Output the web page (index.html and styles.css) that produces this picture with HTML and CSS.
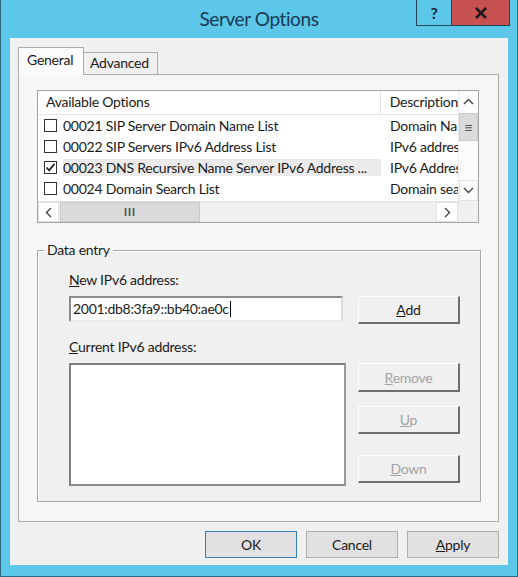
FILE: index.html
```html
<!DOCTYPE html>
<html lang="en">
<head>
  <meta charset="UTF-8" />
  <title>Server Options</title>
  <link rel="stylesheet" href="styles.css">
</head>
<body>
  <div class="window">
    <div class="titlebar">
      <span></span>
      <h1 class="title">Server Options</h1>
      <div class="caption-btns">
        <button class="cap-btn help">?</button>
        <button class="cap-btn close">
          <svg width="14" height="12" viewBox="0 0 14 12"><path d="M2 1 L12 11 M12 1 L2 11" stroke="#1b1b1b" stroke-width="2.6"/></svg>
        </button>
      </div>
    </div>

    <div class="client">
      <div class="tabs">
        <div class="tab active">General</div>
        <div class="tab">Advanced</div>
      </div>

      <div class="tab-page">
        <!-- option list -->
        <div class="listview">
          <div class="lv-body">
            <div class="lv-header">
              <div class="col-name">Available Options</div>
              <div class="col-desc">Description</div>
            </div>
            <div class="lv-row">
              <span class="check"></span>
              <div class="col-name">00021 SIP Server Domain Name List</div>
              <div class="col-desc">Domain Name List</div>
            </div>
            <div class="lv-row">
              <span class="check"></span>
              <div class="col-name">00022 SIP Servers IPv6 Address List</div>
              <div class="col-desc">IPv6 address list</div>
            </div>
            <div class="lv-row selected">
              <span class="check">
                <svg width="11" height="11" viewBox="0 0 11 11"><path d="M1.5 5.5 L4.2 8.3 L9.5 1.8" fill="none" stroke="#222" stroke-width="1.8"/></svg>
              </span>
              <div class="col-name">00023 DNS Recursive Name Server IPv6 Address ...</div>
              <div class="col-desc">IPv6 Address List</div>
            </div>
            <div class="lv-row">
              <span class="check"></span>
              <div class="col-name">00024 Domain Search List</div>
              <div class="col-desc">Domain search list</div>
            </div>
          </div>

          <div class="vscroll">
            <div class="sb-btn up">
              <svg width="11" height="7" viewBox="0 0 11 7"><path d="M1 6 L5.5 1.5 L10 6" fill="none" stroke="#444" stroke-width="1.4"/></svg>
            </div>
            <div class="sb-thumb v">≡</div>
            <div class="sb-track"></div>
            <div class="sb-btn down">
              <svg width="11" height="7" viewBox="0 0 11 7"><path d="M1 1 L5.5 5.5 L10 1" fill="none" stroke="#444" stroke-width="1.4"/></svg>
            </div>
          </div>

          <div class="hscroll">
            <div class="sb-btn left">
              <svg width="7" height="11" viewBox="0 0 7 11"><path d="M6 1 L1.5 5.5 L6 10" fill="none" stroke="#444" stroke-width="1.4"/></svg>
            </div>
            <div class="sb-thumb h">III</div>
            <div class="sb-track"></div>
            <div class="sb-btn right">
              <svg width="7" height="11" viewBox="0 0 7 11"><path d="M1 1 L5.5 5.5 L1 10" fill="none" stroke="#444" stroke-width="1.4"/></svg>
            </div>
          </div>
          <div class="sb-corner"></div>
        </div>

        <fieldset class="groupbox">
          <legend>Data entry</legend>
          <div class="entry-grid">
            <label class="field-label"><u>N</u>ew IPv6 address:</label>
            <div class="textbox">2001:db8:3fa9::bb40:ae0c<span class="caret"></span></div>
            <button class="btn add"><u>A</u>dd</button>

            <label class="field-label second"><u>C</u>urrent IPv6 address:</label>
            <div class="listbox"></div>
            <div class="side-btns">
              <button class="btn disabled remove"><u>R</u>emove</button>
              <button class="btn disabled up"><u>U</u>p</button>
              <button class="btn disabled down"><u>D</u>own</button>
            </div>
          </div>
        </fieldset>
      </div>

      <div class="dialog-btns">
        <button class="dlg-btn default">OK</button>
        <button class="dlg-btn">Cancel</button>
        <button class="dlg-btn"><u>A</u>pply</button>
      </div>
    </div>
  </div>
</body>
</html>
```

FILE: styles.css
```css
:root {
  --frame: #5cc7e9;
  --frame-edge: #2f6a84;
  --face: #f0f0f0;
  --line: #adadad;
  --text: #1a1a1a;
}

* { box-sizing: border-box; }

body {
  margin: 0;
  font-family: Lato, 'Noto Sans', sans-serif;
  font-size: 14px;
  letter-spacing: -0.25px;
  color: var(--text);
}

button { font: inherit; color: inherit; letter-spacing: inherit; }

.window {
  width: 518px;
  height: 577px;
  background: var(--frame);
  border: 1px solid var(--frame-edge);
  border-top: none;
  padding: 0 9px 11px;
  display: flex;
  flex-direction: column;
}

/* Title bar */
.titlebar {
  height: 38px;
  display: grid;
  grid-template-columns: 1fr auto 1fr;
  align-items: start;
}

.title {
  margin: 0;
  font-weight: normal;
  font-size: 19px;
  letter-spacing: -0.4px;
  line-height: 38px;
  color: #1a3a55;
}

.caption-btns {
  justify-self: end;
  display: flex;
  margin-right: -2px;
  border: 1px solid #23465a;
  border-top: none;
}

.cap-btn {
  height: 25px;
  border: none;
  padding: 0;
  display: flex;
  align-items: center;
  justify-content: center;
}

.cap-btn.help {
  width: 35px;
  background: var(--frame);
  border-right: 1px solid #23465a;
  font-weight: bold;
  font-size: 16px;
  color: #14283a;
}

.cap-btn.close {
  width: 57px;
  background: #c75050;
}

/* Client area */
.client {
  flex: 1;
  background: var(--face);
  padding: 9px 9px 0 8px;
  display: flex;
  flex-direction: column;
}

.tabs {
  display: flex;
  align-items: flex-end;
  height: 27px;
  position: relative;
  z-index: 1;
}

.tab {
  border: 1px solid var(--line);
  border-bottom: none;
  background: var(--face);
  height: 22px;
  width: 75px;
  margin-left: -1px;
  padding-left: 6px;
  line-height: 20px;
}

.tab.active {
  background: #fbfbfb;
  width: 66px;
  margin-left: 0;
  padding-left: 8px;
  line-height: 23px;
  margin-bottom: -1px;
  height: 28px;
}

.tab-page {
  height: 448px;
  border: 1px solid var(--line);
  background: #f6f6f6;
  padding: 15px 19px 0 18px;
}

/* List view */
.listview {
  height: 133px;
  border: 1px solid #a3a3a3;
  background: #fff;
  display: grid;
  grid-template-columns: 1fr 20px;
  grid-template-rows: 1fr 21px;
}

.lv-body {
  overflow: hidden;
  white-space: nowrap;
}

.lv-header {
  display: flex;
  height: 24px;
  border-bottom: 1px solid #e5e5e5;
  line-height: 21px;
}

.lv-header .col-name {
  width: 343px;
  padding-left: 8px;
  border-right: 1px solid #e5e5e5;
}

.lv-header .col-desc { padding-left: 9px; }

.lv-row {
  display: flex;
  align-items: center;
  height: 21px;
}

.check {
  width: 13px;
  height: 13px;
  margin: 0 6px;
  border: 1px solid #333;
  background: #fff;
  display: flex;
  align-items: center;
  justify-content: center;
  flex: none;
}

.lv-row .col-name {
  width: 318px;
  flex: none;
  overflow: hidden;
}

.lv-row.selected .col-name { background: #ebebeb; }

.lv-row .col-desc {
  padding-left: 9px;
  flex: none;
}

/* Scroll bars */
.vscroll {
  display: flex;
  flex-direction: column;
  background: #fbfbfb;
  border-left: 1px solid #ececec;
}

.hscroll {
  display: flex;
  background: #f0f0f0;
  border-top: 1px solid #e0e0e0;
}

.sb-corner { background: var(--face); }

.sb-btn {
  display: flex;
  align-items: center;
  justify-content: center;
  flex: none;
}

.sb-btn.up, .sb-btn.down { height: 21px; }
.sb-btn.down { border: 1px solid #e2e2e2; }
.sb-btn.left, .sb-btn.right {
  width: 21px;
  background: #fff;
  border: 1px solid #e2e2e2;
}
.sb-btn.right { width: 22px; }

.sb-track { flex: 1; }

.sb-thumb {
  background: #dadada;
  border: 1px solid #cbcbcb;
  color: #555;
  display: flex;
  align-items: center;
  justify-content: center;
  flex: none;
}

.sb-thumb.v {
  height: 28px;
  margin-top: 1px;
  font-size: 15px;
}

.sb-thumb.h {
  width: 140px;
  margin-left: 1px;
  font-family: 'Liberation Sans', sans-serif;
  font-size: 11px;
  font-weight: bold;
  letter-spacing: 1px;
}

/* Data entry group */
.groupbox {
  margin: 19px 0 0 0;
  padding: 14px 20px 15px 6px;
  border: 1px solid #a5a5a5;
  box-shadow: inset 1px 1px 0 #fff, 1px 1px 0 #fff;
  background: #f0f0f0;
}

.groupbox legend {
  padding: 0 3px;
  line-height: 16px;
}

.entry-grid {
  display: grid;
  grid-template-columns: 277px 102px;
  column-gap: 12px;
  margin-left: 25px;
}

.field-label {
  grid-column: 1 / -1;
  line-height: 16px;
  margin-bottom: 8px;
}

.field-label.second { margin-top: 15px; }

.textbox {
  width: 274px;
  height: 26px;
  background: #fff;
  border: 2px solid #8c8c8c;
  border-right-color: #dcdcdc;
  border-bottom-color: #e8e8e8;
  padding-left: 2px;
  line-height: 22px;
  letter-spacing: -0.3px;
  display: flex;
  align-items: center;
}

.caret {
  width: 1px;
  height: 16px;
  margin-left: 1px;
  background: #000;
}

.listbox {
  height: 123px;
  background: #fff;
  border: 2px solid #7d7d7d;
  border-right-color: #9a9a9a;
  border-bottom-color: #8a8a8a;
}

.btn {
  height: 28px;
  background: var(--face);
  border: 1px solid #fff;
  border-right: 2px solid #6e6e6e;
  border-bottom: 2px solid #6e6e6e;
  padding: 0;
}

.btn.disabled { color: #a4a4a4; }

.side-btns {
  display: flex;
  flex-direction: column;
}

.btn.remove { height: 29px; }
.btn.up { margin-top: 14px; }
.btn.down { margin-top: 21px; }

/* OK / Cancel / Apply */
.dialog-btns {
  display: flex;
  justify-content: flex-end;
  gap: 9px;
  margin-top: 9px;
}

.dlg-btn {
  width: 92px;
  height: 27px;
  background: #e1e1e1;
  border: 1px solid var(--line);
  padding: 0;
}

.dlg-btn.default { border-color: #3c7fb1; }
```
